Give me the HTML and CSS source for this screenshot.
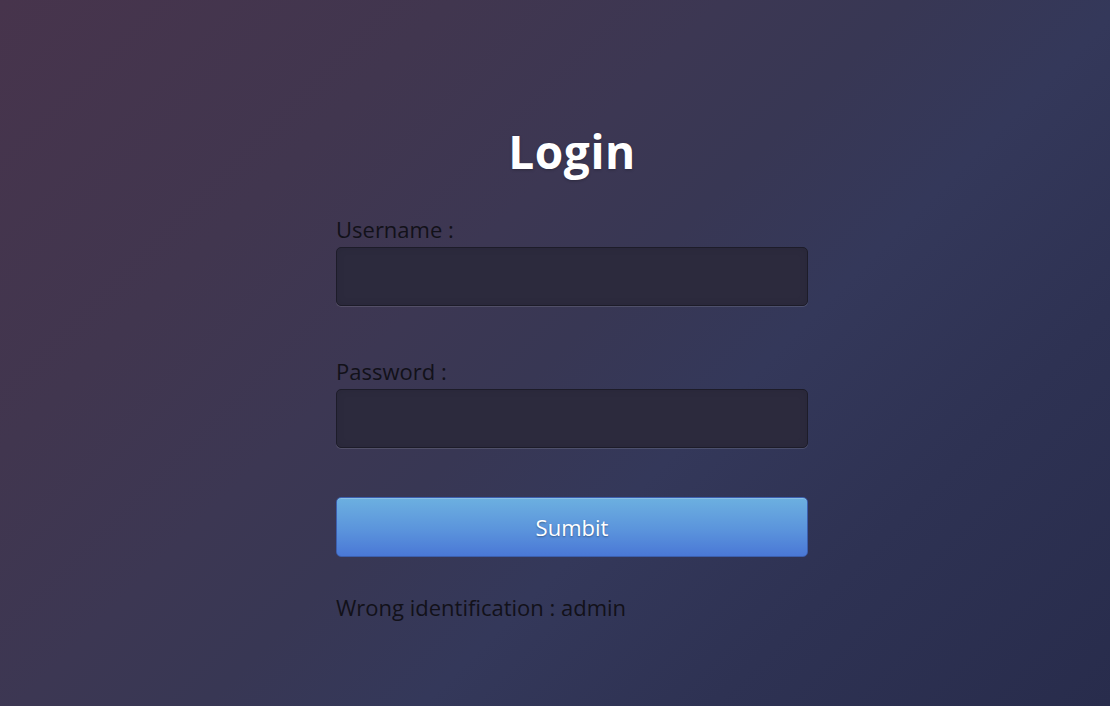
FILE: index.html
```html
<!DOCTYPE html>
<html lang="en">
<head>
<meta charset="utf-8">
<title>Login</title>
<link rel="stylesheet" href="styles.css">
</head>
<body>
<main class="page">
  <form class="login">
    <h1 class="title">Login</h1>
    <label class="label" for="user">Username :</label>
    <input class="field" id="user" type="text">
    <label class="label" for="pass">Password :</label>
    <input class="field" id="pass" type="password">
    <button class="submit" type="button">Sumbit</button>
    <p class="error">Wrong identification : admin</p>
  </form>
</main>
</body>
</html>
```
FILE: styles.css
```css
* { box-sizing: border-box; }
html, body { margin: 0; height: 100%; }
body {
  font-family: "Open Sans", "Liberation Sans", sans-serif;
  background: linear-gradient(135deg, #47344c 0%, #41364f 25%, #3c3753 40%, #383754 50%, #34385a 62%, #2e3253 78%, #282c4c 100%);
  overflow: hidden;
}
.page {
  height: 100%;
  display: flex;
  justify-content: center;
  padding-left: 34px;
  padding-top: 123px;
}
.login {
  width: 472px;
  display: flex;
  flex-direction: column;
}
.title {
  margin: 0 0 37px;
  font-size: 46px;
  line-height: 56px;
  font-weight: 700;
  letter-spacing: 0.6px;
  color: #ffffff;
  text-align: center;
  text-shadow: 0 1px 3px rgba(0,0,0,0.25);
}
.label {
  font-size: 22px;
  line-height: 26px;
  color: #121119;
  margin-bottom: 5px;
}
.field {
  height: 59px;
  width: 100%;
  margin: 0 0 52px;
  background: #2c2a3d;
  border: 1px solid #1d1c29;
  border-radius: 5px;
  box-shadow: 0 1px 0 rgba(255,255,255,0.12), inset 0 0 8px rgba(0,0,0,0.08);
  color: #ddd;
  font: inherit;
}
.field + .label + .field { margin-bottom: 49px; }
.submit {
  height: 60px;
  width: 100%;
  border: 1px solid #3c5fae;
  border-radius: 5px;
  background: linear-gradient(180deg, #6cb0e0 0%, #5b94dc 55%, #4a78d6 100%);
  color: #ffffff;
  font: inherit;
  font-size: 22px;
  text-shadow: 0 1px 2px rgba(0,0,0,0.35);
  box-shadow: inset 0 1px 0 rgba(255,255,255,0.2);
  padding: 0;
}
.error {
  margin: 37px 0 0;
  font-size: 22px;
  line-height: 26px;
  color: #121119;
}
```
